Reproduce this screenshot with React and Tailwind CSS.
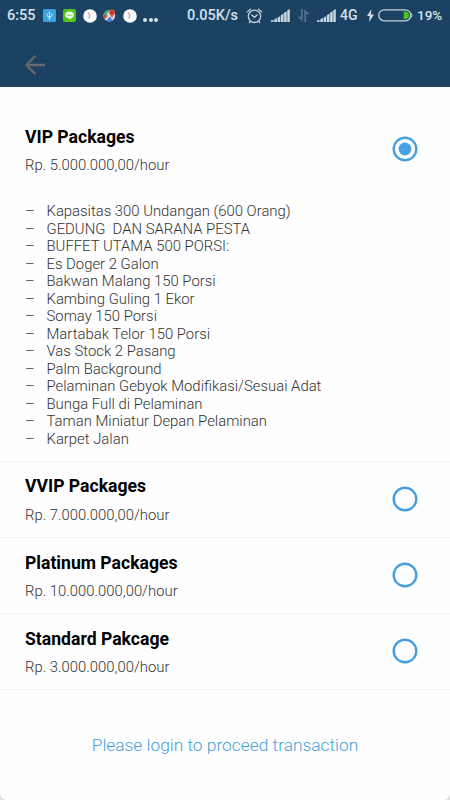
import React, { useState } from "react";

const packages = [
  {
    id: "vip",
    name: "VIP Packages",
    price: "Rp. 5.000.000,00/hour",
    items: [
      "Kapasitas 300 Undangan (600 Orang)",
      "GEDUNG  DAN SARANA PESTA",
      "BUFFET UTAMA 500 PORSI:",
      "Es Doger 2 Galon",
      "Bakwan Malang 150 Porsi",
      "Kambing Guling 1 Ekor",
      "Somay 150 Porsi",
      "Martabak Telor 150 Porsi",
      "Vas Stock 2 Pasang",
      "Palm Background",
      "Pelaminan Gebyok Modifikasi/Sesuai Adat",
      "Bunga Full di Pelaminan",
      "Taman Miniatur Depan Pelaminan",
      "Karpet Jalan",
    ],
  },
  { id: "vvip", name: "VVIP Packages", price: "Rp. 7.000.000,00/hour" },
  { id: "platinum", name: "Platinum Packages", price: "Rp. 10.000.000,00/hour" },
  { id: "standard", name: "Standard Pakcage", price: "Rp. 3.000.000,00/hour" },
];

function UsbIcon() {
  return (
    <svg className="h-[13px] w-[13px]" viewBox="0 0 13 13" fill="none">
      <rect width="13" height="13" rx="1.5" fill="#3da2dc" />
      <path
        d="M6.5 3v7.2M4 4.6v1.6q0 1.7 2.5 1.7T9 6.2V4.6"
        stroke="#d9effc"
        strokeWidth="0.9"
      />
      <path d="M5.5 3.6 6.5 2.2l1 1.4z" fill="#d9effc" />
      <circle cx="6.5" cy="10" r="0.8" fill="#d9effc" />
    </svg>
  );
}

function ChatIcon() {
  return (
    <svg className="h-[13px] w-[13px]" viewBox="0 0 13 13">
      <rect width="13" height="13" rx="2" fill="#4fc414" />
      <path
        d="M6.5 2.4c-2.5 0-4.4 1.5-4.4 3.5 0 1.8 1.6 3.2 3.8 3.4.6.1.4.6.3 1.5 2-1 4.7-2.9 4.7-4.9 0-2-1.9-3.5-4.4-3.5z"
        fill="#f4ffe9"
      />
      <path d="M4 5v1.5h5V5M6.5 5v1.5" stroke="#69c93a" strokeWidth="0.6" fill="none" />
    </svg>
  );
}

function ClockDisc() {
  return (
    <svg className="h-[14px] w-[14px]" viewBox="0 0 14 14" fill="none">
      <circle cx="7" cy="7" r="6.8" fill="#fafafa" />
      <path d="M5.2 3.2 6.8 6.8" stroke="#df7479" strokeWidth="0.9" />
      <path d="M6.8 6.5 5.7 9.5" stroke="#9b8388" strokeWidth="0.9" />
    </svg>
  );
}

function MapsIcon() {
  return (
    <svg className="h-[13px] w-[13px]" viewBox="0 0 13 13">
      <defs>
        <clipPath id="maps-disc">
          <circle cx="6.3" cy="6.7" r="5.8" />
        </clipPath>
      </defs>
      <g clipPath="url(#maps-disc)">
        <path d="M0 0h13v13H0z" fill="#d7dde0" />
        <path d="M0 0h8L0 9z" fill="#36a567" />
        <path d="M0 8l3-3 2 2L1.5 11z" fill="#c4574f" />
        <path d="M2.5 13l4-5.5 4.5 5.5z" fill="#4486df" />
        <path d="M1.5 11.5 7.5 5" stroke="#e9eef0" strokeWidth="1" />
      </g>
      <path
        d="M9 .5a3 3 0 0 1 3 3C12 5.7 9.6 6.4 9 9.5 8.4 6.4 6 5.7 6 3.5a3 3 0 0 1 3-3z"
        fill="#df4a40"
      />
      <circle cx="9" cy="3.5" r="1" fill="#8b211f" />
    </svg>
  );
}

function AlarmIcon() {
  return (
    <svg
      className="h-[16px] w-[17px]"
      viewBox="0 0 17 16"
      fill="none"
      stroke="#bfd0de"
      strokeWidth="1.3"
      strokeLinecap="round"
    >
      <circle cx="8.5" cy="8.3" r="6.2" />
      <path d="M1.2 3.9 4.5 1.2M15.8 3.9 12.5 1.2M5.8 7 8.5 9.3 11.1 7M4.4 13.2l-1 1.3M12.6 13.2l1 1.3" />
    </svg>
  );
}

function SignalIcon() {
  return (
    <svg className="h-[13px] w-[19px]" viewBox="0 0 19 13" fill="#c9d7e3">
      <path d="M0 13v-1.5L2.5 11v2zM3.3 13v-2.8L5.9 9v4zM6.6 13V8.4L9.2 7.2V13zM9.9 13V6.2L12.5 4.6V13zM13.1 13V3.8L15.7 2.3V13zM16.3 13V1.2L18.8 0v13z" />
    </svg>
  );
}

function DataArrows() {
  return (
    <svg className="h-[13px] w-[13px]" viewBox="0 0 13 13" fill="#53718a">
      <path d="M3.9 0h1.8v12.5L.5 7.8h3.4zM7.3 13V.3l5.2 4.9H9.1V13z" />
    </svg>
  );
}

function BatteryIcon() {
  return (
    <svg className="h-[13px] w-[35px]" viewBox="0 0 35 13" fill="none">
      <rect x="0.8" y="0.8" width="32" height="11" rx="5.5" stroke="#c3d3df" strokeWidth="1.3" />
      <path d="M25.7 2.5h2q3.5 1 3.5 3.8t-3.5 3.8h-2z" fill="#4cc321" />
      <path d="M33.5 4.5q1 1.8 0 3.6" stroke="#c3d3df" strokeWidth="1" />
    </svg>
  );
}

function StatusBar() {
  return (
    <div className="flex h-[31px] items-center text-[14.5px] font-medium text-[#d5e2ec]">
      <span className="ml-[7px] w-[36px]">6:55</span>
      <div className="flex w-[94px] items-center justify-between">
        <UsbIcon />
        <ChatIcon />
        <ClockDisc />
        <MapsIcon />
        <ClockDisc />
      </div>
      <div className="mt-[9px] ml-[6px] flex gap-[1.5px]">
        <span className="size-[4px] rounded-full bg-[#d5e2ec]" />
        <span className="size-[4px] rounded-full bg-[#d5e2ec]" />
        <span className="size-[4px] rounded-full bg-[#d5e2ec]" />
      </div>
      <span className="ml-[29px] w-[59px]">0.05K/s</span>
      <AlarmIcon />
      <div className="ml-[8px] flex items-center gap-[7px]">
        <SignalIcon />
        <DataArrows />
        <SignalIcon />
      </div>
      <span className="ml-[4px] w-[27px] text-[14px]">4G</span>
      <svg className="h-[13px] w-[7px]" viewBox="0 0 7 13" fill="#d5e2ec">
        <path d="M4.5 0 0 7h2.8L2 13l5-7.6H3.8z" />
      </svg>
      <span className="ml-[4px]">
        <BatteryIcon />
      </span>
      <span className="ml-[4px] text-[13.5px]">19%</span>
    </div>
  );
}

function Radio({ checked, onChange, label }) {
  return (
    <button
      role="radio"
      aria-checked={checked}
      aria-label={label}
      onClick={onChange}
      className="mb-[1px]"
    >
      <svg className="size-[26px]" viewBox="0 0 26 26" fill="none">
        <circle cx="13" cy="13" r="11.3" stroke="#489fdf" strokeWidth="2.4" />
        {checked && <circle cx="13" cy="13" r="6.4" fill="#489fe4" />}
      </svg>
    </button>
  );
}

function PackageRow({ pkg, checked, onSelect }) {
  return (
    <section className="border-b border-[#f2f2f2] pr-[32px] pl-[25px]">
      <div className="flex h-[75.1px] items-center justify-between">
        <div className="pt-[2px]">
          <h2 className="text-[17.6px] leading-[22px] font-bold text-black">{pkg.name}</h2>
          <p className="mt-[7.4px] text-[14.85px] leading-[20px] font-light text-[#333]">
            {pkg.price}
          </p>
        </div>
        <Radio checked={checked} onChange={onSelect} label={pkg.name} />
      </div>
      {pkg.items && (
        <ul className="pt-[16.1px] pb-[12.4px] text-[14.87px] leading-[17.5px] font-light text-[#333]">
          {pkg.items.map((item) => (
            <li key={item} className="flex whitespace-pre">
              <span className="w-[21.5px]">–</span>
              {item}
            </li>
          ))}
        </ul>
      )}
    </section>
  );
}

export default function App() {
  const [selected, setSelected] = useState("vip");

  return (
    <div className="flex h-[800px] w-[450px] flex-col overflow-hidden bg-[#e0e0e0] font-['Roboto',sans-serif]">
      <header className="h-[87px] shrink-0 border-b border-[#2b4050] bg-[#1b4263]">
        <StatusBar />
        <button aria-label="Back" className="mt-[24px] ml-[25px] block">
          <svg
            className="h-[20px] w-[20px]"
            viewBox="0 0 20 20"
            fill="none"
            stroke="#666a6f"
            strokeWidth="2.3"
          >
            <path d="M20 10H1.8M10.5.8 1.3 10l9.2 9.2" />
          </svg>
        </button>
      </header>

      <main className="flex-1 rounded-b-[7px] bg-[#fefefe] pt-[25px]" role="radiogroup">
        {packages.map((pkg) => (
          <PackageRow
            key={pkg.id}
            pkg={pkg}
            checked={selected === pkg.id}
            onSelect={() => setSelected(pkg.id)}
          />
        ))}
        <button className="mt-[44.5px] block w-full text-center text-[17.35px] leading-[22px] font-light text-[#489fda]">
          Please login to proceed transaction
        </button>
      </main>
    </div>
  );
}
